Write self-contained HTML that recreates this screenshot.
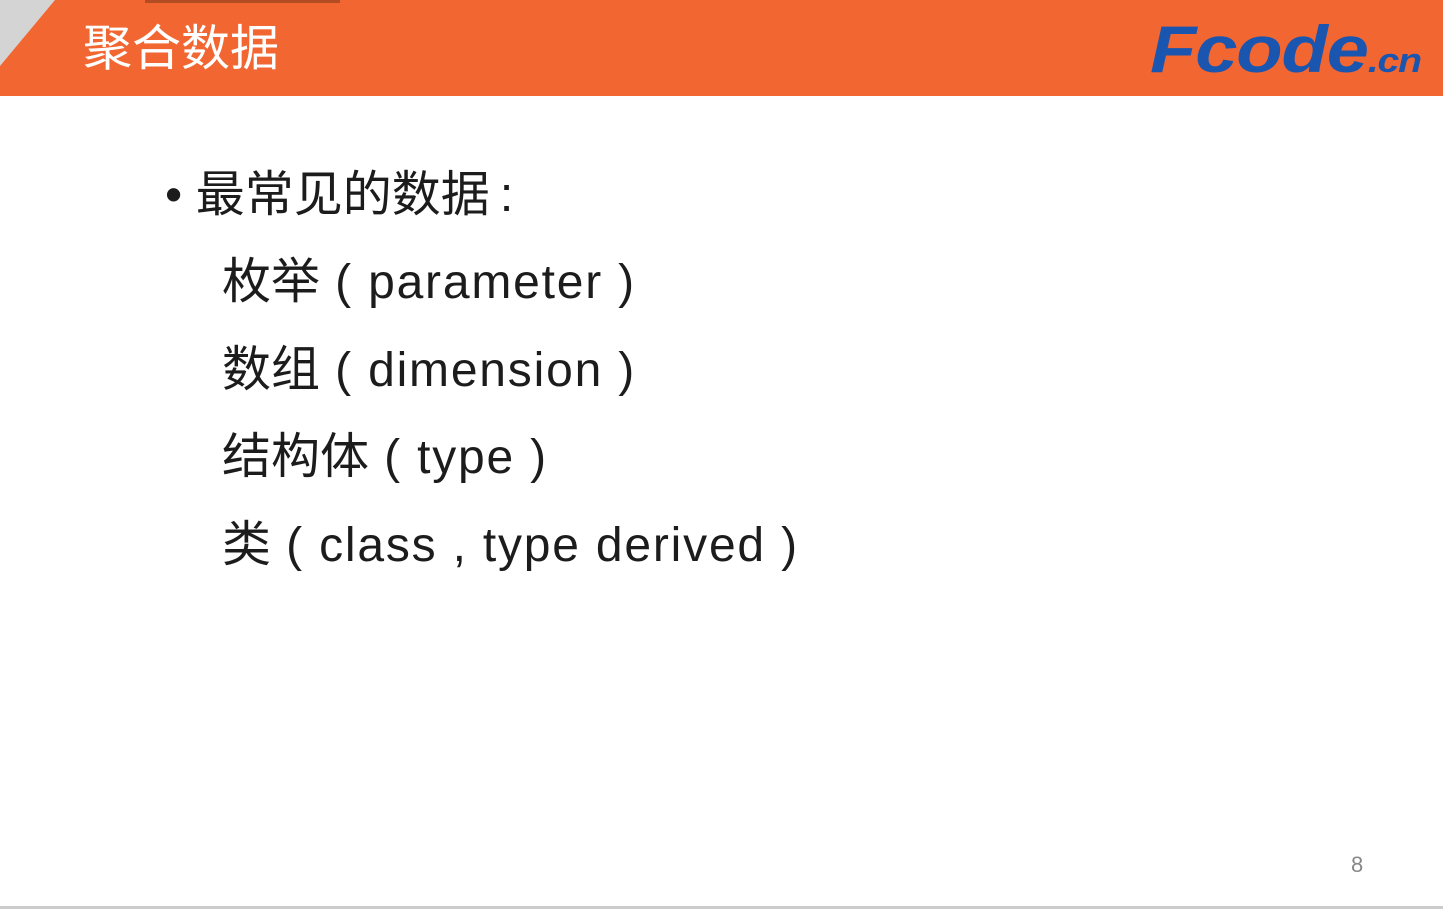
<!DOCTYPE html>
<html><head><meta charset="utf-8"><style>
body{margin:0;width:1443px;height:909px;background:#fff;position:relative;overflow:hidden;font-family:"Liberation Sans","Noto Sans CJK SC",sans-serif}
.bar{position:absolute;left:0;top:0;width:1443px;height:96px;background:#F26631}
.tri{position:absolute;left:0;top:0;width:0;height:0;border-top:66px solid #d4d4d4;border-right:55px solid transparent}
.sh{position:absolute;left:145px;top:0;width:195px;height:3px;background:#8a3a1a;opacity:.6}
.title{position:absolute;left:83px;top:19px;font-size:49px;color:#fff;line-height:60px}
.logo{position:absolute;left:1150px;top:14px;font-size:66px;font-weight:bold;font-style:italic;color:#1a56b0;line-height:70px;transform:scaleX(1.15);transform-origin:left top;letter-spacing:-1px}
.logo small{font-size:34px}
.t{position:absolute;font-size:49px;color:#1c1c1c;line-height:60px;white-space:nowrap}
.l{font-size:48px;letter-spacing:1.8px}
.pg{position:absolute;left:1351px;top:852px;font-size:22px;color:#888}
.bot{position:absolute;left:0;top:906px;width:1443px;height:3px;background:#ccc}
</style></head><body>
<div class="bar"></div><div class="tri"></div><div class="sh"></div>
<div class="title">聚合数据</div>
<div class="logo">Fcode<small>.cn</small></div>
<div class="t" style="left:165px;top:165px">•&nbsp;最常见的数据<span style="margin-left:10px">:</span></div>
<div class="t" style="left:222px;top:252px">枚举<span class="l"> ( parameter )</span></div>
<div class="t" style="left:222px;top:340px">数组<span class="l"> ( dimension )</span></div>
<div class="t" style="left:222px;top:427px">结构体<span class="l"> ( type )</span></div>
<div class="t" style="left:222px;top:515px">类<span class="l"> ( class , type derived )</span></div>
<div class="pg">8</div>
<div class="bot"></div>
</body></html>
